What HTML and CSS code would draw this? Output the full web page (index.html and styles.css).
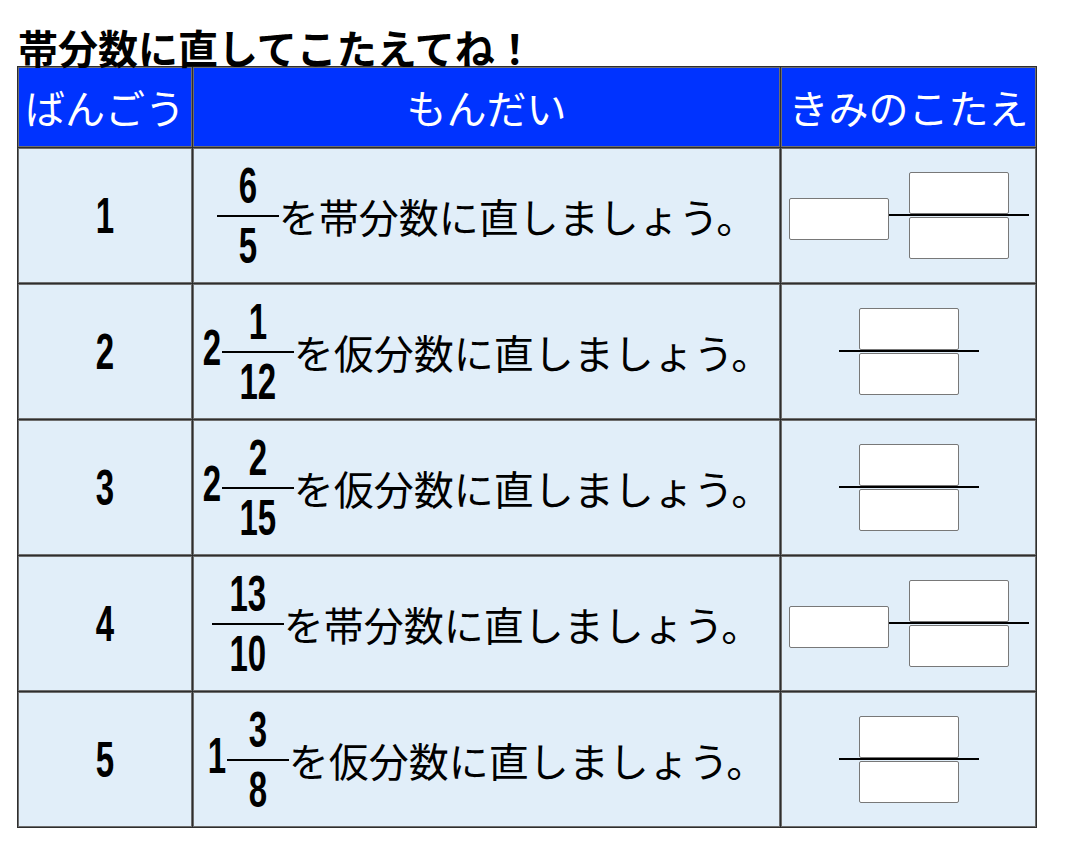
FILE: index.html
```html
<!DOCTYPE html>
<html lang="ja">
<head>
<meta charset="utf-8">
<title>帯分数に直してこたえてね！</title>
<link rel="stylesheet" href="styles.css">
</head>
<body>
<div class="page">
  <h1 class="title">帯分数に直してこたえてね！</h1>
  <table class="quiz">
    <colgroup>
      <col class="col-no">
      <col class="col-q">
      <col class="col-a">
    </colgroup>
    <thead>
      <tr><th>ばんごう</th><th>もんだい</th><th>きみのこたえ</th></tr>
    </thead>
    <tbody>
      <tr>
        <td class="no"><span class="big">1</span></td>
        <td class="q"><div class="expr">
          <span class="frac w1"><span class="fn"><span class="dg">6</span></span><span class="fd"><span class="dg">5</span></span></span>
          <span class="txt">を帯分数に直しましょう。</span>
        </div></td>
        <td class="a"><div class="ans">
          <span class="box whole-box"></span>
          <span class="afrac"><span class="box"></span><span class="bar"></span><span class="box"></span></span>
        </div></td>
      </tr>
      <tr>
        <td class="no"><span class="big">2</span></td>
        <td class="q"><div class="expr">
          <span class="whole"><span class="dg">2</span></span>
          <span class="frac w2"><span class="fn"><span class="dg">1</span></span><span class="fd"><span class="dg">12</span></span></span>
          <span class="txt">を仮分数に直しましょう。</span>
        </div></td>
        <td class="a"><div class="ans">
          <span class="afrac"><span class="box"></span><span class="bar"></span><span class="box"></span></span>
        </div></td>
      </tr>
      <tr>
        <td class="no"><span class="big">3</span></td>
        <td class="q"><div class="expr">
          <span class="whole"><span class="dg">2</span></span>
          <span class="frac w2"><span class="fn"><span class="dg">2</span></span><span class="fd"><span class="dg">15</span></span></span>
          <span class="txt">を仮分数に直しましょう。</span>
        </div></td>
        <td class="a"><div class="ans">
          <span class="afrac"><span class="box"></span><span class="bar"></span><span class="box"></span></span>
        </div></td>
      </tr>
      <tr>
        <td class="no"><span class="big">4</span></td>
        <td class="q"><div class="expr">
          <span class="frac w2"><span class="fn"><span class="dg">13</span></span><span class="fd"><span class="dg">10</span></span></span>
          <span class="txt">を帯分数に直しましょう。</span>
        </div></td>
        <td class="a"><div class="ans">
          <span class="box whole-box"></span>
          <span class="afrac"><span class="box"></span><span class="bar"></span><span class="box"></span></span>
        </div></td>
      </tr>
      <tr>
        <td class="no"><span class="big">5</span></td>
        <td class="q"><div class="expr">
          <span class="whole"><span class="dg">1</span></span>
          <span class="frac w1"><span class="fn"><span class="dg">3</span></span><span class="fd"><span class="dg">8</span></span></span>
          <span class="txt">を仮分数に直しましょう。</span>
        </div></td>
        <td class="a"><div class="ans">
          <span class="afrac"><span class="box"></span><span class="bar"></span><span class="box"></span></span>
        </div></td>
      </tr>
    </tbody>
  </table>
</div>
</body>
</html>
```

FILE: styles.css
```css
html, body {
  margin: 0;
  padding: 0;
  background: #ffffff;
}

body {
  font-family: "Noto Sans CJK JP", "Noto Sans", sans-serif;
  color: #000;
}

.page {
  padding: 29px 0 0 17px;
}

.title {
  margin: 0;
  font-size: 40px;
  line-height: 37px;
  font-weight: bold;
  padding-left: 1px;
}

.quiz {
  border-collapse: separate;
  border-spacing: 1px;
  background: #2e2e2e;
  table-layout: fixed;
  width: 1020px;
}

.col-no { width: 174px; }
.col-q { width: 587px; }
.col-a { width: 255px; }

.quiz th,
.quiz td {
  border: 1px solid #6e6e6e;
  padding: 0;
}

.quiz th {
  height: 78px;
  background: #0033ff;
  color: #ffffff;
  font-size: 40px;
  font-weight: normal;
  text-align: center;
  line-height: 1;
  white-space: nowrap;
}

.quiz td {
  height: 133px;
  background: #e1eef9;
  text-align: center;
  vertical-align: middle;
}

/* condensed digits */
.dg,
.big {
  display: inline-block;
  font-family: "Liberation Sans", Arial, sans-serif;
  font-weight: bold;
  font-size: 50px;
  line-height: 1;
  transform: scaleX(0.66);
  transform-origin: center;
  white-space: nowrap;
}

.expr {
  display: flex;
  align-items: center;
  justify-content: center;
}

.whole {
  display: inline-flex;
  justify-content: center;
  width: 20px;
  margin-bottom: 8px;
}

.frac {
  display: inline-flex;
  flex-direction: column;
}

.fn,
.fd {
  display: flex;
  align-items: center;
  justify-content: center;
  height: 58px;
  padding: 0 20px;
}

.fn {
  border-bottom: 2px solid #000;
}

.frac.w1 .fn,
.frac.w1 .fd {
  width: 22px;
}

.frac.w2 .fn,
.frac.w2 .fd {
  width: 32px;
}

.txt {
  font-size: 40px;
  line-height: 1.2;
  white-space: nowrap;
}

.ans {
  display: flex;
  align-items: center;
  justify-content: center;
}

.box {
  display: block;
  width: 100px;
  height: 42px;
  box-sizing: border-box;
  border: 1px solid #787878;
  border-radius: 2px;
  background: #ffffff;
}

.whole-box {
  margin-top: 6px;
}

.afrac {
  display: flex;
  flex-direction: column;
  align-items: center;
  width: 140px;
}

.bar {
  display: block;
  width: 140px;
  height: 2px;
  background: #000;
  margin: 0 0 1px;
}
```
